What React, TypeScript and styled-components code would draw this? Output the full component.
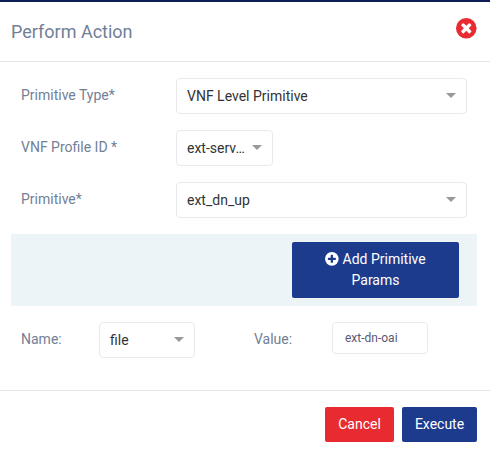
import React from "react";
import styled, { createGlobalStyle } from "styled-components";

const GlobalStyle = createGlobalStyle`
  *, *::before, *::after { box-sizing: border-box; }
  body {
    margin: 0;
    background: #fff;
    font-family: Roboto, sans-serif;
    font-size: 14px;
    line-height: 21px;
    color: #718096;
  }
`;

const Modal = styled.div`
  height: 454px;
  overflow: hidden;
  border-top: 2px solid #0d1f56;
  background: #fff;
`;

const Header = styled.header`
  display: flex;
  justify-content: space-between;
  align-items: flex-start;
  height: 60px;
  padding: 16px 13px 0 11px;
  border-bottom: 1px solid #e3e4e6;
`;

const Title = styled.h4`
  margin: 0;
  font-size: 18px;
  font-weight: 400;
  line-height: 27px;
`;

const CloseButton = styled.button`
  display: flex;
  padding: 0;
  border: 0;
  background: none;
  color: #e82b31;
`;

const Body = styled.main`
  height: 328px;
  padding: 16px 13px 0 11px;
`;

const FieldRow = styled.div`
  display: flex;
  align-items: flex-start;
  height: 36px;
  margin-bottom: 16px;
`;

const Label = styled.label<{ $width: number; $gap?: number }>`
  width: ${(p) => p.$width}px;
  margin-left: ${(p) => p.$gap ?? 10}px;
  padding-top: 7px;
  flex: none;
`;

const SelectBox = styled.div<{ $width: number }>`
  display: flex;
  align-items: center;
  justify-content: space-between;
  width: ${(p) => p.$width}px;
  height: 36px;
  padding: 0 10px;
  border: 1px solid #e8e9eb;
  border-radius: 4px;
  color: #333;
  white-space: nowrap;
`;

const Caret = styled.span`
  border: 5px solid transparent;
  border-top-color: #999;
  border-bottom-width: 0;
  margin-bottom: 1px;
`;

const ParamsBar = styled.div`
  display: flex;
  justify-content: flex-end;
  height: 72px;
  margin-bottom: 16px;
  padding: 8px 18px;
  background: #ecf4f8;
`;

const Button = styled.button<{ $danger?: boolean; $width: number }>`
  width: ${(p) => p.$width}px;
  padding: 7px 12px;
  border: 0;
  border-radius: 2px;
  background: ${(p) => (p.$danger ? "#e82b31" : "#1d3b8d")};
  color: #fff;
  font: inherit;
  svg { vertical-align: -2px; }
`;

const AddButton = styled(Button)`
  padding: 7px 28px;
`;

const ValueInput = styled.input`
  width: 96px;
  height: 32px;
  padding: 0 12px;
  border: 1px solid #e8e9eb;
  border-radius: 4px;
  background: #fff;
  color: #5c5873;
  font: 12px Roboto, sans-serif;
`;

const Footer = styled.footer`
  display: flex;
  justify-content: flex-end;
  gap: 8px;
  padding: 16px 13px 0;
  border-top: 1px solid #e3e4e6;
`;

const crossPath =
  "M1277 1122q0-26-19-45l-181-181 181-181q19-19 19-45 0-27-19-46l-90-90q-19-19-46-19-26 0-45 19l-181 181-181-181q-19-19-45-19-27 0-46 19l-90 90q-19 19-19 46 0 26 19 45l181 181-181 181q-19 19-19 45 0 27 19 46l90 90q19 19 46 19 26 0 45-19l181-181 181 181q19 19 45 19 27 0 46-19l90-90q19-19 19-46z";

const plusPath =
  "M1344 960v-128q0-26-19-45t-45-19h-256v-256q0-26-19-45t-45-19h-128q-26 0-45 19t-19 45v256h-256q-26 0-45 19t-19 45v128q0 26 19 45t45 19h256v256q0 26 19 45t45 19h128q26 0 45-19t19-45v-256h256q26 0 45-19t19-45z";

interface DiscIconProps {
  size: number;
  path: string;
  inner: string;
}

const DiscIcon = ({ size, path, inner }: DiscIconProps) => (
  <svg width={size} height={size} viewBox="128 128 1536 1536" aria-hidden>
    <circle cx="896" cy="896" r="768" fill="currentColor" />
    <path d={path} fill={inner} />
  </svg>
);

interface SelectProps {
  value: string;
  width: number;
}

const Select = ({ value, width }: SelectProps) => (
  <SelectBox $width={width} role="combobox" aria-expanded={false}>
    <span>{value}</span>
    <Caret />
  </SelectBox>
);

const fields = [
  { label: "Primitive Type*", value: "VNF Level Primitive", width: 291 },
  { label: "VNF Profile ID *", value: "ext-serv…", width: 97 },
  { label: "Primitive*", value: "ext_dn_up", width: 291 },
];

export default function App() {
  return (
    <>
      <GlobalStyle />
      <Modal role="dialog">
        <Header>
          <Title>Perform Action</Title>
          <CloseButton aria-label="Close">
            <DiscIcon size={20.57} path={crossPath} inner="#fff" />
          </CloseButton>
        </Header>
        <Body>
          {fields.map((f) => (
            <FieldRow key={f.label}>
              <Label $width={155}>{f.label}</Label>
              <Select value={f.value} width={f.width} />
            </FieldRow>
          ))}
          <ParamsBar>
            <AddButton $width={167}>
              <DiscIcon size={13.71} path={plusPath} inner="#1d3b8d" /> Add Primitive Params
            </AddButton>
          </ParamsBar>
          <FieldRow>
            <Label $width={78}>Name:</Label>
            <Select value="file" width={96} />
            <Label $width={78} $gap={59} htmlFor="param-value">Value:</Label>
            <ValueInput id="param-value" defaultValue="ext-dn-oai" />
          </FieldRow>
        </Body>
        <Footer>
          <Button $danger $width={69}>Cancel</Button>
          <Button $width={75}>Execute</Button>
        </Footer>
      </Modal>
    </>
  );
}
